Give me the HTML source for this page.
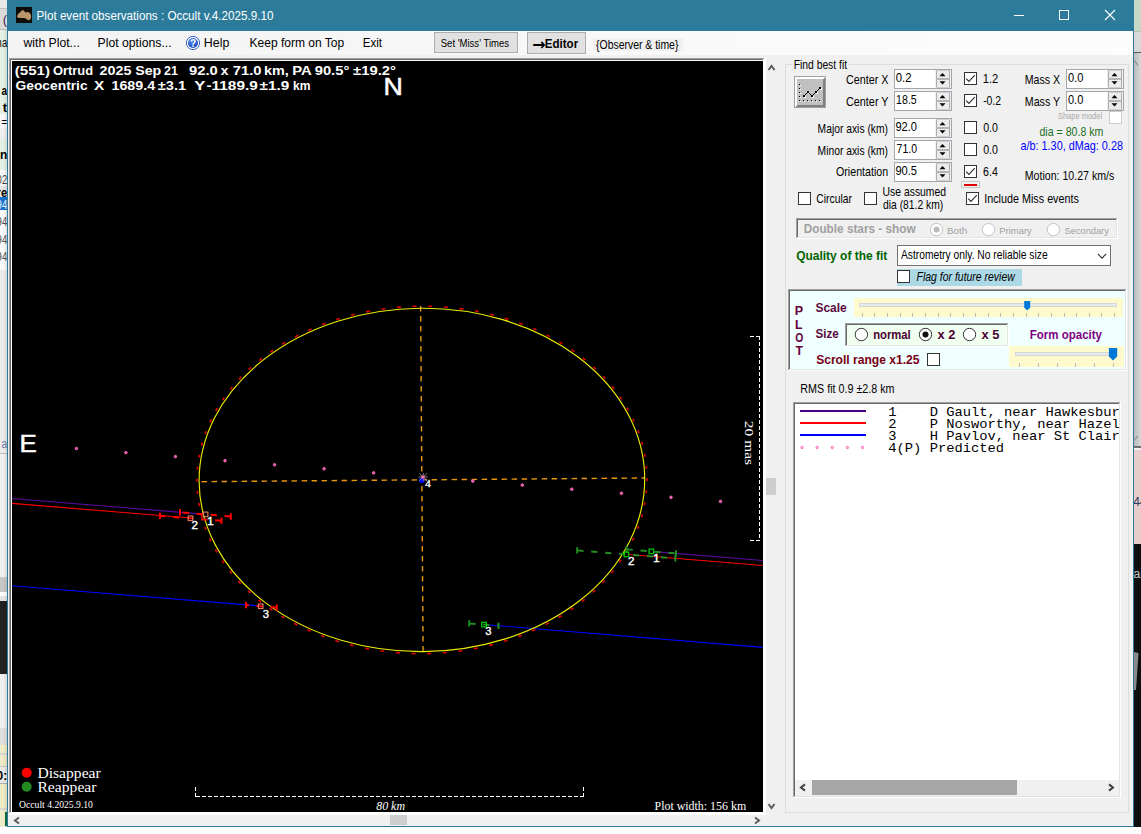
<!DOCTYPE html>
<html><head><meta charset="utf-8"><title>Plot event observations : Occult v.4.2025.9.10</title>
<style>
html,body{margin:0;padding:0;background:#fff;overflow:hidden}
body{width:1141px;height:834px;position:relative}
.sf{font-family:"Liberation Sans",sans-serif}
.rf{font-family:"Liberation Serif",serif}
.mf{font-family:"Liberation Mono",monospace}
text{white-space:pre}
</style></head><body>
<svg width="1141" height="834" viewBox="0 0 1141 834" style="position:absolute;left:0;top:0">
<defs>
<linearGradient id="mg" x1="0" x2="1" y1="0" y2="0"><stop offset="0" stop-color="#f3f3f3"/><stop offset="1" stop-color="#fdfdfd"/></linearGradient>
<radialGradient id="hg" cx="0.4" cy="0.3" r="0.8"><stop offset="0" stop-color="#5a8df0"/><stop offset="1" stop-color="#0a3fb8"/></radialGradient>
<clipPath id="pc"><rect x="12" y="61" width="751" height="751"/></clipPath>
<clipPath id="lc"><rect x="795" y="404" width="324" height="376"/></clipPath>
</defs>
<rect x="0" y="0" width="1141" height="834" fill="#ffffff" />
<clipPath id="ls"><rect x="0" y="0" width="7" height="827"/></clipPath>
<clipPath id="rs"><rect x="1134" y="0" width="7" height="827"/></clipPath>
<linearGradient id="lsh" x1="0" x2="1" y1="0" y2="0"><stop offset="0" stop-color="#000" stop-opacity="0"/><stop offset="0.5" stop-color="#000" stop-opacity="0.01"/><stop offset="1" stop-color="#000" stop-opacity="0.10"/></linearGradient>
<linearGradient id="rsh" x1="0" x2="1" y1="0" y2="0"><stop offset="0" stop-color="#000" stop-opacity="0.14"/><stop offset="1" stop-color="#000" stop-opacity="0"/></linearGradient>
<g id="leftstrip" shape-rendering="crispEdges">
<rect x="0" y="0" width="7" height="827" fill="#e6f1e6" />
<rect x="0" y="0" width="7" height="8" fill="#e8e8e8" />
<rect x="0" y="8" width="7" height="1" fill="#c0c0c0" />
<rect x="0" y="9" width="7" height="21" fill="#dadada" />
<rect x="0" y="29" width="7" height="1" fill="#b8b8b8" />
<rect x="0" y="114" width="7" height="14" fill="#fafafa" />
<rect x="0" y="128" width="7" height="10" fill="#f0f0f0" />
<rect x="0" y="170" width="7" height="16" fill="#f8f8f8" />
<rect x="0" y="186" width="7" height="11" fill="#e6e6e6" />
<rect x="0" y="197" width="7" height="13" fill="#1874d0" />
<rect x="0" y="210" width="7" height="60" fill="#fafafa" />
<rect x="0" y="270" width="7" height="183" fill="#ececec" />
<rect x="0" y="453" width="7" height="1" fill="#c0c0c0" />
<rect x="0" y="454" width="7" height="123" fill="#f0f0f0" />
<rect x="0" y="577" width="7" height="15" fill="#c8c8c8" />
<rect x="0" y="592" width="7" height="4" fill="#ffffff" />
<rect x="0" y="596" width="7" height="5" fill="#e4e4e4" />
<rect x="0" y="601" width="7" height="73" fill="#222222" />
<rect x="0" y="674" width="7" height="54" fill="#f0f0f0" />
<rect x="0" y="728" width="7" height="17" fill="#e0e0e0" />
<rect x="0" y="745" width="7" height="81" fill="#f0ecc8" />
<rect x="0" y="753" width="7" height="2" fill="#d8d8d8" />
<rect x="0" y="767" width="7" height="16" fill="#e8e8e4" />
<rect x="0" y="783" width="7" height="1" fill="#b0b0b0" />
<rect x="0" y="766" width="7" height="1" fill="#c8c8c8" />
<rect x="0" y="808" width="7" height="2" fill="#d8d8d8" />
<rect x="5" y="812" width="2" height="14" fill="#107040" />
<rect x="0" y="30" width="7" height="797" fill="url(#lsh)" />
</g>
<g clip-path="url(#ls)" text-anchor="end">
<text class="sf" x="7.2" y="24" font-size="13" fill="#402050">(</text>
<text class="sf" x="7.2" y="47" font-size="12" fill="#000" textLength="10.6" lengthAdjust="spacingAndGlyphs">na</text>
<text class="sf" x="7.2" y="95" font-size="12" fill="#000" font-weight="bold" textLength="5.6" lengthAdjust="spacingAndGlyphs">a</text>
<text class="sf" x="7.2" y="112" font-size="13" fill="#000" font-weight="bold">t</text>
<text class="sf" x="7.2" y="126" font-size="11" fill="#000" textLength="5.6" lengthAdjust="spacingAndGlyphs">=</text>
<text class="sf" x="7.2" y="159" font-size="12" fill="#000" font-weight="bold" textLength="10.6" lengthAdjust="spacingAndGlyphs">in</text>
<text class="sf" x="7.2" y="184" font-size="12" fill="#404040" font-weight="mf" textLength="10.6" lengthAdjust="spacingAndGlyphs">02</text>
<text class="sf" x="7.2" y="196.5" font-size="12" fill="#000" font-weight="bold" textLength="10.6" lengthAdjust="spacingAndGlyphs">re</text>
<text class="sf" x="7.2" y="208.5" font-size="13" fill="#e8f0ff" font-weight="mf" textLength="10.6" lengthAdjust="spacingAndGlyphs">94</text>
<text class="sf" x="7.2" y="226" font-size="13" fill="#505050" font-weight="mf" textLength="10.6" lengthAdjust="spacingAndGlyphs">94</text>
<text class="sf" x="7.2" y="243.5" font-size="13" fill="#505050" font-weight="mf" textLength="10.6" lengthAdjust="spacingAndGlyphs">94</text>
<text class="sf" x="7.2" y="261" font-size="13" fill="#505050" font-weight="mf" textLength="10.6" lengthAdjust="spacingAndGlyphs">94</text>
<text class="sf" x="7.2" y="448" font-size="12" fill="#6878a8" textLength="5.6" lengthAdjust="spacingAndGlyphs">a</text>
<text class="sf" x="7.2" y="780" font-size="12" fill="#000" font-weight="bold" textLength="10.6" lengthAdjust="spacingAndGlyphs">0:</text>
</g>
<g id="rightstrip" shape-rendering="crispEdges">
<rect x="1134" y="0" width="7" height="32" fill="#c6d8c6" />
<rect x="1134" y="32" width="7" height="414" fill="#d8d8d8" />
<rect x="1134" y="31" width="7" height="1" fill="#b8c0b8" />
<rect x="1134" y="52" width="7" height="1" fill="#585860" />
<rect x="1134" y="53" width="7" height="393" fill="url(#rsh)" />
<rect x="1134" y="446" width="7" height="2" fill="#707070" />
<rect x="1134" y="448" width="7" height="2" fill="#f0f0f0" />
<rect x="1134" y="450" width="7" height="94" fill="#e8cccc" />
<rect x="1134" y="544" width="7" height="283" fill="#0e0e0e" />
</g>
<path d="M1134.5 60.5 L1138 65.5" stroke="#888" stroke-width="1.2"/>
<path d="M1134.5 440 L1138 436" stroke="#999" stroke-width="1.2"/>
<path d="M1134 652 L1138.5 653 L1136 690 L1134 690 Z" fill="#8a8a8a"/>
<g clip-path="url(#rs)">
<text class="sf" x="1133.2" y="506" font-size="12" fill="#283858">44</text>
<text class="sf" x="1133.5" y="578" font-size="12" fill="#c8c8c8">ar</text>
</g>
<g id="window" shape-rendering="crispEdges">
<rect x="7" y="0" width="1127" height="827" fill="#2c7b9a" />
<rect x="8" y="31" width="1125" height="795" fill="#f0f0f0" />
<rect x="8" y="31" width="1125" height="24" fill="url(#mg)" />
</g>
<rect x="16" y="7" width="16" height="16" fill="#0e0c08" />
<path d="M17.1 16.6 C17.3 14.6 18.6 13.2 20.2 12.2 C21 10.9 22.3 10.1 23.4 10.3 C24.3 10.5 24.4 11.9 25.2 12.3 C26.2 12.7 27.4 11.8 28.6 12.2 C30.2 12.8 31.2 14.8 31.1 16.6 C31 18.4 30.4 20 29 20.2 C27.6 20.4 26.6 18.9 25.2 18.3 C23.6 17.6 21.4 18.1 19.6 18 C18.2 17.9 17 17.8 17.1 16.6 Z" fill="#b8956a"/>
<text class="sf" x="36.57" y="20" font-size="12.2" fill="#fff" textLength="236.86" lengthAdjust="spacingAndGlyphs" >Plot event observations : Occult v.4.2025.9.10</text>
<line x1="1014" y1="15.5" x2="1024" y2="15.5" stroke="#fff" stroke-width="1" shape-rendering="crispEdges"/>
<rect x="1059.5" y="10.5" width="9" height="9" fill="none" stroke="#fff" stroke-width="1" shape-rendering="crispEdges"/>
<path d="M1105 10 L1115 20 M1115 10 L1105 20" stroke="#fff" stroke-width="1.1" fill="none"/>
<text class="sf" x="23.50" y="46.8" font-size="12.2" fill="#000" textLength="56.27" lengthAdjust="spacingAndGlyphs" >with Plot...</text>
<text class="sf" x="97.52" y="46.8" font-size="12.2" fill="#000" textLength="74.07" lengthAdjust="spacingAndGlyphs" >Plot options...</text>
<circle cx="193" cy="43" r="6.6" fill="#fff" stroke="#3a62c8" stroke-width="1"/>
<circle cx="193" cy="43" r="5" fill="url(#hg)"/>
<text class="sf" x="189.94" y="46.6" font-size="10" fill="#fff" font-weight="bold" textLength="6.23" lengthAdjust="spacingAndGlyphs" >?</text>
<text class="sf" x="203.81" y="46.8" font-size="12.2" fill="#000" textLength="25.51" lengthAdjust="spacingAndGlyphs" >Help</text>
<text class="sf" x="249.54" y="46.8" font-size="12.2" fill="#000" textLength="94.65" lengthAdjust="spacingAndGlyphs" >Keep form on Top</text>
<text class="sf" x="362.77" y="46.8" font-size="12.2" fill="#000" textLength="19.31" lengthAdjust="spacingAndGlyphs" >Exit</text>
<rect x="434.5" y="32.5" width="83" height="20" fill="#e1e1e1" stroke="#adadad" stroke-width="1" shape-rendering="crispEdges"/>
<text class="sf" x="440.77" y="46.5" font-size="11" fill="#000" textLength="68.27" lengthAdjust="spacingAndGlyphs" >Set 'Miss' Times</text>
<rect x="527.5" y="32.5" width="58" height="21" fill="#e1e1e1" stroke="#adadad" stroke-width="1" shape-rendering="crispEdges"/>
<text x="532.2" y="49.6" font-size="16" font-weight="bold" style="font-family:'DejaVu Sans',sans-serif">→</text>
<text class="sf" x="544.85" y="48" font-size="13" fill="#000" font-weight="bold" textLength="33.31" lengthAdjust="spacingAndGlyphs" >Editor</text>
<rect x="593" y="38" width="90" height="13" fill="#f0f0f0" />
<text class="sf" x="596.04" y="49.2" font-size="12" fill="#000" textLength="82.34" lengthAdjust="spacingAndGlyphs" >{Observer &amp; time}</text>
<g shape-rendering="crispEdges">
<rect x="9" y="58" width="757" height="757" fill="#ffffff" />
<rect x="9" y="58" width="755" height="1" fill="#a0a0a0" />
<rect x="9" y="58" width="1" height="755" fill="#a0a0a0" />
<rect x="10" y="59" width="753" height="1" fill="#696969" />
<rect x="10" y="59" width="1" height="753" fill="#696969" />
<rect x="12" y="61" width="751" height="751" fill="#000000" />
<rect x="766" y="478" width="10" height="17" fill="#cdcdcd" />
<rect x="390" y="815" width="17" height="10" fill="#cdcdcd" />
</g>
<path d="M768.5 70.0 L771.5 66.0 L774.5 70.0" stroke="#5c5c5c" stroke-width="2.0" fill="none"/>
<path d="M768.5 804.0 L771.5 808.0 L774.5 804.0" stroke="#5c5c5c" stroke-width="2.0" fill="none"/>
<path d="M19.0 817.5 L15.0 820.5 L19.0 823.5" stroke="#5c5c5c" stroke-width="2.0" fill="none"/>
<path d="M755.0 817.5 L759.0 820.5 L755.0 823.5" stroke="#5c5c5c" stroke-width="2.0" fill="none"/>
<g clip-path="url(#pc)">
<text class="sf" x="14.75" y="74.6" font-size="13" fill="#fff" font-weight="bold" textLength="35.20" lengthAdjust="spacingAndGlyphs" >(551)</text>
<text class="sf" x="52.88" y="74.6" font-size="13" fill="#fff" font-weight="bold" textLength="40.17" lengthAdjust="spacingAndGlyphs" >Ortrud</text>
<text class="sf" x="99.50" y="74.6" font-size="13" fill="#fff" font-weight="bold" textLength="31.85" lengthAdjust="spacingAndGlyphs" >2025</text>
<text class="sf" x="135.17" y="74.6" font-size="13" fill="#fff" font-weight="bold" textLength="26.08" lengthAdjust="spacingAndGlyphs" >Sep</text>
<text class="sf" x="164.06" y="74.6" font-size="13" fill="#fff" font-weight="bold" textLength="13.88" lengthAdjust="spacingAndGlyphs" >21</text>
<text class="sf" x="188.98" y="74.6" font-size="13" fill="#fff" font-weight="bold" textLength="28.73" lengthAdjust="spacingAndGlyphs" >92.0</text>
<text class="sf" x="220.83" y="74.6" font-size="13" fill="#fff" font-weight="bold" textLength="7.65" lengthAdjust="spacingAndGlyphs" >x</text>
<text class="sf" x="232.81" y="74.6" font-size="13" fill="#fff" font-weight="bold" textLength="28.80" lengthAdjust="spacingAndGlyphs" >71.0</text>
<text class="sf" x="263.99" y="74.6" font-size="13" fill="#fff" font-weight="bold" textLength="24.79" lengthAdjust="spacingAndGlyphs" >km,</text>
<text class="sf" x="292.23" y="74.6" font-size="13" fill="#fff" font-weight="bold" textLength="19.54" lengthAdjust="spacingAndGlyphs" >PA</text>
<text class="sf" x="314.68" y="74.6" font-size="13" fill="#fff" font-weight="bold" textLength="34.63" lengthAdjust="spacingAndGlyphs" >90.5°</text>
<text class="sf" x="353.03" y="74.6" font-size="13" fill="#fff" font-weight="bold" textLength="42.97" lengthAdjust="spacingAndGlyphs" >±19.2°</text>
<text class="sf" x="15.55" y="89.9" font-size="13" fill="#fff" font-weight="bold" textLength="72.05" lengthAdjust="spacingAndGlyphs" >Geocentric</text>
<text class="sf" x="93.95" y="89.9" font-size="13" fill="#fff" font-weight="bold" textLength="10.26" lengthAdjust="spacingAndGlyphs" >X</text>
<text class="sf" x="111.44" y="89.9" font-size="13" fill="#fff" font-weight="bold" textLength="43.71" lengthAdjust="spacingAndGlyphs" >1689.4</text>
<text class="sf" x="157.83" y="89.9" font-size="13" fill="#fff" font-weight="bold" textLength="28.32" lengthAdjust="spacingAndGlyphs" >±3.1</text>
<text class="sf" x="194.35" y="89.9" font-size="13" fill="#fff" font-weight="bold" textLength="11.13" lengthAdjust="spacingAndGlyphs" >Y</text>
<text class="sf" x="206.49" y="89.9" font-size="13" fill="#fff" font-weight="bold" textLength="51.28" lengthAdjust="spacingAndGlyphs" >-1189.9</text>
<text class="sf" x="259.62" y="89.9" font-size="13" fill="#fff" font-weight="bold" textLength="29.70" lengthAdjust="spacingAndGlyphs" >±1.9</text>
<text class="sf" x="293.05" y="89.9" font-size="13" fill="#fff" font-weight="bold" textLength="17.48" lengthAdjust="spacingAndGlyphs" >km</text>
<text class="sf" x="383.46" y="95" font-size="24" fill="#fff" textLength="19.34" lengthAdjust="spacingAndGlyphs" stroke="#fff" stroke-width="0.5">N</text>
<text class="sf" x="19.43" y="452" font-size="24" fill="#fff" textLength="17.26" lengthAdjust="spacingAndGlyphs" stroke="#fff" stroke-width="0.5">E</text>
<line x1="12" y1="498.5" x2="203.5" y2="514.165" stroke="#5a0aa0" stroke-width="1.1" />
<line x1="12" y1="503.4" x2="188" y2="517.797" stroke="#ff0000" stroke-width="1.1" />
<line x1="12" y1="585.7" x2="258" y2="605.823" stroke="#0000ff" stroke-width="1.1" />
<line x1="654" y1="551.6" x2="763" y2="560.516" stroke="#5a0aa0" stroke-width="1.1"/>
<line x1="628.7" y1="554.5" x2="763" y2="565.486" stroke="#ff0000" stroke-width="1.1"/>
<line x1="487" y1="624.8" x2="763" y2="647.377" stroke="#0000ff" stroke-width="1.1"/>
<line x1="201.6" y1="481.7" x2="645" y2="478" stroke="#e8960c" stroke-width="1.4" stroke-dasharray="5.5 4.5"/>
<line x1="420.6" y1="306" x2="423.1" y2="652" stroke="#e8960c" stroke-width="1.4" stroke-dasharray="5.5 4.5"/>
<ellipse cx="421.9" cy="479.95" rx="222.8" ry="171.7" transform="rotate(-0.476 421.9 479.95)" fill="none" stroke="#eaea00" stroke-width="1.15"/>
<path d="M646.9 478.1L646.9 481.1M646.4 490.2L646.2 493.2M644.9 502.3L644.3 505.3M642.3 514.2L641.5 517.2M638.6 526.0L637.5 528.9M633.8 537.6L632.5 540.5M628.0 548.9L626.4 551.7M621.2 559.8L619.4 562.5M613.5 570.4L611.4 573.0M604.8 580.5L602.5 583.0M595.2 590.2L592.7 592.5M584.7 599.3L582.0 601.4M573.5 607.8L570.6 609.8M561.6 615.7L558.5 617.5M548.9 622.9L545.6 624.6M535.6 629.4L532.2 631.0M521.8 635.2L518.3 636.6M507.5 640.3L503.9 641.4M492.8 644.6L489.1 645.5M477.7 648.0L473.9 648.8M462.4 650.7L458.5 651.2M446.9 652.5L442.9 652.8M431.2 653.5L427.3 653.6M415.5 653.6L411.6 653.5M399.8 652.9L395.9 652.6M384.3 651.3L380.4 650.8M368.9 648.9L365.1 648.2M353.7 645.7L350.0 644.8M339.0 641.7L335.3 640.6M324.6 636.9L321.0 635.6M310.7 631.3L307.3 629.8M297.3 625.0L294.0 623.3M284.5 618.0L281.4 616.1M272.4 610.3L269.5 608.3M261.1 602.0L258.3 599.8M250.5 593.0L248.0 590.7M240.7 583.6L238.4 581.1M231.9 573.6L229.8 571.0M223.9 563.1L222.1 560.5M216.9 552.3L215.4 549.5M211.0 541.1L209.6 538.3M206.0 529.6L204.9 526.7M202.1 517.9L201.3 514.9M199.3 506.0L198.8 503.0M197.6 493.9L197.3 490.9M196.9 481.8L196.9 478.8M197.4 469.7L197.6 466.7M198.9 457.6L199.5 454.6M201.5 445.7L202.3 442.7M205.2 433.9L206.3 431.0M210.0 422.3L211.3 419.4M215.8 411.0L217.4 408.2M222.6 400.1L224.4 397.4M230.3 389.5L232.4 386.9M239.0 379.4L241.3 376.9M248.6 369.7L251.1 367.4M259.1 360.6L261.8 358.5M270.3 352.1L273.2 350.1M282.2 344.2L285.3 342.4M294.9 337.0L298.2 335.3M308.2 330.5L311.6 328.9M322.0 324.7L325.5 323.3M336.3 319.6L339.9 318.5M351.0 315.3L354.7 314.4M366.1 311.9L369.9 311.1M381.4 309.2L385.3 308.7M396.9 307.4L400.9 307.1M412.6 306.4L416.5 306.3M428.3 306.3L432.2 306.4M444.0 307.0L447.9 307.3M459.5 308.6L463.4 309.1M474.9 311.0L478.7 311.7M490.1 314.2L493.8 315.1M504.8 318.2L508.5 319.3M519.2 323.0L522.8 324.3M533.1 328.6L536.5 330.1M546.5 334.9L549.8 336.6M559.3 341.9L562.4 343.8M571.4 349.6L574.3 351.6M582.7 357.9L585.5 360.1M593.3 366.9L595.8 369.2M603.1 376.3L605.4 378.8M611.9 386.3L614.0 388.9M619.9 396.8L621.7 399.4M626.9 407.6L628.4 410.4M632.8 418.8L634.2 421.6M637.8 430.3L638.9 433.2M641.7 442.0L642.5 445.0M644.5 453.9L645.0 456.9M646.2 466.0L646.5 469.0" stroke="#e00000" stroke-width="1.6" fill="none"/>
<circle cx="76.4" cy="448.5" r="1.3" fill="#d850a8" stroke="#ff70c0" stroke-width="0.9"/>
<circle cx="125.9" cy="452.6" r="1.3" fill="#d850a8" stroke="#ff70c0" stroke-width="0.9"/>
<circle cx="175.4" cy="456.6" r="1.3" fill="#d850a8" stroke="#ff70c0" stroke-width="0.9"/>
<circle cx="225.0" cy="460.7" r="1.3" fill="#d850a8" stroke="#ff70c0" stroke-width="0.9"/>
<circle cx="274.6" cy="464.8" r="1.3" fill="#d850a8" stroke="#ff70c0" stroke-width="0.9"/>
<circle cx="324.1" cy="468.8" r="1.3" fill="#d850a8" stroke="#ff70c0" stroke-width="0.9"/>
<circle cx="373.6" cy="472.9" r="1.3" fill="#d850a8" stroke="#ff70c0" stroke-width="0.9"/>
<circle cx="472.8" cy="481.1" r="1.3" fill="#d850a8" stroke="#ff70c0" stroke-width="0.9"/>
<circle cx="522.3" cy="485.1" r="1.3" fill="#d850a8" stroke="#ff70c0" stroke-width="0.9"/>
<circle cx="571.8" cy="489.2" r="1.3" fill="#d850a8" stroke="#ff70c0" stroke-width="0.9"/>
<circle cx="621.4" cy="493.3" r="1.3" fill="#d850a8" stroke="#ff70c0" stroke-width="0.9"/>
<circle cx="671.0" cy="497.3" r="1.3" fill="#d850a8" stroke="#ff70c0" stroke-width="0.9"/>
<circle cx="720.5" cy="501.4" r="1.3" fill="#d850a8" stroke="#ff70c0" stroke-width="0.9"/>
<line x1="230.8" y1="516.461" x2="180" y2="512.306" stroke="#ff0000" stroke-width="2" stroke-dasharray="6.3 7.7"/>
<line x1="180" y1="509.106" x2="180" y2="515.506" stroke="#ff0000" stroke-width="2" />
<line x1="230.8" y1="513.261" x2="230.8" y2="519.661" stroke="#ff0000" stroke-width="2" />
<line x1="221.4" y1="520.828" x2="159.9" y2="515.797" stroke="#ff0000" stroke-width="2" stroke-dasharray="6.3 7.7"/>
<line x1="159.9" y1="512.597" x2="159.9" y2="518.997" stroke="#ff0000" stroke-width="2" />
<line x1="221.4" y1="517.628" x2="221.4" y2="524.028" stroke="#ff0000" stroke-width="2" />
<line x1="276.8" y1="607.617" x2="246" y2="605.098" stroke="#ff0000" stroke-width="2" stroke-dasharray="6.3 7.7"/>
<line x1="246" y1="601.898" x2="246" y2="608.298" stroke="#ff0000" stroke-width="2" />
<line x1="276.8" y1="604.417" x2="276.8" y2="610.817" stroke="#ff0000" stroke-width="2" />
<line x1="577.2" y1="550.375" x2="675.3" y2="558.4" stroke="#228b22" stroke-width="2" stroke-dasharray="6.3 7.7"/>
<line x1="577.2" y1="547.175" x2="577.2" y2="553.575" stroke="#228b22" stroke-width="2" />
<line x1="675.3" y1="555.2" x2="675.3" y2="561.6" stroke="#228b22" stroke-width="2" />
<line x1="626.5" y1="549.363" x2="676" y2="553.412" stroke="#228b22" stroke-width="2" stroke-dasharray="6.3 7.7"/>
<line x1="626.5" y1="546.163" x2="626.5" y2="552.563" stroke="#228b22" stroke-width="2" />
<line x1="676" y1="550.212" x2="676" y2="556.612" stroke="#228b22" stroke-width="2" />
<line x1="469.2" y1="623.389" x2="498.6" y2="625.794" stroke="#228b22" stroke-width="2" stroke-dasharray="6.3 7.7"/>
<line x1="469.2" y1="620.189" x2="469.2" y2="626.589" stroke="#228b22" stroke-width="2" />
<line x1="498.6" y1="622.594" x2="498.6" y2="628.994" stroke="#228b22" stroke-width="2" />
<rect x="203.3" y="512.1" width="4.6" height="4.6" fill="none" stroke="#e9806a" stroke-width="1.1"/>
<rect x="188.2" y="516.0" width="4.6" height="4.6" fill="none" stroke="#e9806a" stroke-width="1.1"/>
<rect x="258.4" y="604.0" width="4.6" height="4.6" fill="none" stroke="#e9806a" stroke-width="1.1"/>
<rect x="624.1" y="552.1" width="4.6" height="4.6" fill="none" stroke="#00e000" stroke-width="1.1"/>
<rect x="649.1" y="549.1" width="4.6" height="4.6" fill="none" stroke="#00e000" stroke-width="1.1"/>
<rect x="481.7" y="622.3" width="4.6" height="4.6" fill="none" stroke="#00e000" stroke-width="1.1"/>
<text class="sf" x="191.62" y="529.2" font-size="10" fill="#fff" textLength="6.48" lengthAdjust="spacingAndGlyphs" stroke="#fff" stroke-width="0.35">2</text>
<text class="sf" x="207.09" y="525.2" font-size="10" fill="#fff" textLength="6.78" lengthAdjust="spacingAndGlyphs" stroke="#fff" stroke-width="0.35">1</text>
<text class="sf" x="262.75" y="617.6" font-size="10" fill="#fff" textLength="6.21" lengthAdjust="spacingAndGlyphs" stroke="#fff" stroke-width="0.35">3</text>
<text class="sf" x="628.12" y="565.2" font-size="10" fill="#fff" textLength="6.48" lengthAdjust="spacingAndGlyphs" stroke="#fff" stroke-width="0.35">2</text>
<text class="sf" x="652.99" y="562.2" font-size="10" fill="#fff" textLength="6.78" lengthAdjust="spacingAndGlyphs" stroke="#fff" stroke-width="0.35">1</text>
<text class="sf" x="485.35" y="635.3" font-size="10" fill="#fff" textLength="6.21" lengthAdjust="spacingAndGlyphs" stroke="#fff" stroke-width="0.35">3</text>
<circle cx="421.7" cy="480.3" r="2.8" fill="#0000ff"/>
<path d="M419 473.2 L427.4 480.8 M427.4 473.2 L419 480.8 M423.2 472.8 L423.2 481.2 M418.6 477 L427.8 477" stroke="#a0a0a0" stroke-width="0.8" fill="none"/>
<rect x="421.8" y="475.6" width="2.8" height="2.8" fill="#ff69b4" />
<text class="rf" x="425.38" y="487" font-size="10" fill="#fff" textLength="5.48" lengthAdjust="spacingAndGlyphs" stroke="#fff" stroke-width="0.35">4</text>
<line x1="759.5" y1="336" x2="759.5" y2="540.5" stroke="#fff" stroke-width="1" stroke-dasharray="4 2" shape-rendering="crispEdges"/>
<line x1="750" y1="336.3" x2="760" y2="336.3" stroke="#fff" stroke-width="1" stroke-dasharray="4 2" shape-rendering="crispEdges"/>
<line x1="750" y1="540.5" x2="760" y2="540.5" stroke="#fff" stroke-width="1" stroke-dasharray="4 2" shape-rendering="crispEdges"/>
<g transform="translate(745.2 421.5) rotate(90)">
<text class="rf" x="-0.70" y="0" font-size="13.2" fill="#fff" textLength="44.25" lengthAdjust="spacingAndGlyphs" >20 mas</text>
</g>
<line x1="195.5" y1="796.5" x2="583.5" y2="796.5" stroke="#fff" stroke-width="1" stroke-dasharray="4 2" shape-rendering="crispEdges"/>
<line x1="195.5" y1="787" x2="195.5" y2="797" stroke="#fff" stroke-width="1" stroke-dasharray="4 2" shape-rendering="crispEdges"/>
<line x1="583.5" y1="787" x2="583.5" y2="797" stroke="#fff" stroke-width="1" stroke-dasharray="4 2" shape-rendering="crispEdges"/>
<text class="rf" x="376.26" y="810" font-size="13" fill="#fff" font-style="italic" textLength="28.73" lengthAdjust="spacingAndGlyphs" >80 km</text>
<text class="rf" x="654.54" y="809.6" font-size="13" fill="#fff" textLength="91.64" lengthAdjust="spacingAndGlyphs" >Plot width: 156 km</text>
<circle cx="26.7" cy="772.7" r="5" fill="#ff0000"/>
<circle cx="26.7" cy="786.7" r="5" fill="#228b22"/>
<text class="rf" x="37.43" y="778" font-size="15.5" fill="#fff" textLength="63.30" lengthAdjust="spacingAndGlyphs" >Disappear</text>
<text class="rf" x="37.43" y="792" font-size="15.5" fill="#fff" textLength="59.13" lengthAdjust="spacingAndGlyphs" >Reappear</text>
<text class="rf" x="19.11" y="807.7" font-size="10" fill="#fff" textLength="73.83" lengthAdjust="spacingAndGlyphs" >Occult 4.2025.9.10</text>
</g>
<g shape-rendering="crispEdges">
<rect x="785" y="64" width="1" height="749" fill="#dcdcdc" />
<rect x="1128" y="64" width="1" height="749" fill="#dcdcdc" />
<rect x="785" y="812" width="344" height="1" fill="#dcdcdc" />
<rect x="785" y="64" width="7" height="1" fill="#dcdcdc" />
<rect x="849" y="64" width="280" height="1" fill="#dcdcdc" />
</g>
<text class="sf" x="793.67" y="69" font-size="12.7" fill="#000" textLength="53.42" lengthAdjust="spacingAndGlyphs" >Find best fit</text>
<g shape-rendering="crispEdges">
<rect x="794" y="76" width="32" height="32" fill="#a0a0a0" />
<rect x="795" y="77" width="30" height="30" fill="#ffffff" />
<path d="M825 77 L825 107 L795 107 L797 105 L823 105 L823 79 Z" fill="#808080"/>
<rect x="797" y="79" width="26" height="26" fill="#c0c0c0" />
<rect x="800" y="85" width="1" height="1" fill="#ffffff" />
<rect x="799" y="84" width="1" height="1" fill="#000" />
<rect x="800" y="89" width="1" height="1" fill="#ffffff" />
<rect x="799" y="88" width="1" height="1" fill="#000" />
<rect x="800" y="93" width="1" height="1" fill="#ffffff" />
<rect x="799" y="92" width="1" height="1" fill="#000" />
<rect x="800" y="97" width="1" height="1" fill="#ffffff" />
<rect x="799" y="96" width="1" height="1" fill="#000" />
<rect x="800" y="101" width="1" height="1" fill="#ffffff" />
<rect x="799" y="100" width="1" height="1" fill="#000" />
<rect x="804" y="101" width="1" height="1" fill="#ffffff" />
<rect x="803" y="100" width="1" height="1" fill="#000" />
<rect x="808" y="101" width="1" height="1" fill="#ffffff" />
<rect x="807" y="100" width="1" height="1" fill="#000" />
<rect x="812" y="101" width="1" height="1" fill="#ffffff" />
<rect x="811" y="100" width="1" height="1" fill="#000" />
<rect x="816" y="101" width="1" height="1" fill="#ffffff" />
<rect x="815" y="100" width="1" height="1" fill="#000" />
<rect x="820" y="101" width="1" height="1" fill="#ffffff" />
<rect x="819" y="100" width="1" height="1" fill="#000" />
<rect x="804" y="96" width="2" height="2" fill="#ffffff" />
<rect x="808" y="92" width="2" height="2" fill="#ffffff" />
<rect x="812" y="96" width="2" height="2" fill="#ffffff" />
<rect x="816" y="92" width="2" height="2" fill="#ffffff" />
<rect x="820" y="88" width="2" height="2" fill="#ffffff" />
</g>
<path d="M804 96 L808 92 L812 96 L820 88" stroke="#000" stroke-width="1" fill="none"/>
<g shape-rendering="crispEdges">
<rect x="803" y="95" width="2" height="2" fill="#000" />
<rect x="807" y="91" width="2" height="2" fill="#000" />
<rect x="811" y="95" width="2" height="2" fill="#000" />
<rect x="815" y="91" width="2" height="2" fill="#000" />
<rect x="819" y="87" width="2" height="2" fill="#000" />
</g>
<text class="sf" x="845.96" y="84" font-size="12.7" fill="#000" textLength="42.57" lengthAdjust="spacingAndGlyphs" >Center X</text>
<g shape-rendering="crispEdges">
<rect x="894.5" y="69.5" width="57" height="19" fill="#ffffff" stroke="#a4a6ac" stroke-width="1" />
<rect x="935" y="70" width="16" height="18" fill="#f0f0f0" />
<rect x="936" y="71" width="14" height="16" fill="#ececec" />
<rect x="936" y="71" width="1" height="16" fill="#acacac" />
<rect x="949" y="71" width="1" height="16" fill="#acacac" />
<rect x="936" y="70" width="14" height="1" fill="#cfcfcf" />
<rect x="936" y="87" width="14" height="1" fill="#cfcfcf" />
<rect x="936" y="78" width="14" height="2" fill="#b4b4b4" />
</g>
<path d="M939.5 76.2 L942.5 73 L945.5 76.2 Z" fill="#000"/>
<path d="M939.5 81.3 L942.5 84.5 L945.5 81.3 Z" fill="#000"/>
<text class="sf" x="895.75" y="82" font-size="12.7" fill="#000" textLength="15.72" lengthAdjust="spacingAndGlyphs" >0.2</text>
<rect x="964.5" y="72.5" width="12" height="12" fill="#ffffff" stroke="#333333" stroke-width="1" shape-rendering="crispEdges"/>
<path d="M966.2 78.6 L968.9 81.5 L974.8 75.2" stroke="#303030" stroke-width="1.15" fill="none"/>
<text class="sf" x="982.77" y="83" font-size="12.7" fill="#000" textLength="15.39" lengthAdjust="spacingAndGlyphs" >1.2</text>
<text class="sf" x="845.96" y="106" font-size="12.7" fill="#000" textLength="42.60" lengthAdjust="spacingAndGlyphs" >Center Y</text>
<g shape-rendering="crispEdges">
<rect x="894.5" y="91.5" width="57" height="19" fill="#ffffff" stroke="#a4a6ac" stroke-width="1" />
<rect x="935" y="92" width="16" height="18" fill="#f0f0f0" />
<rect x="936" y="93" width="14" height="16" fill="#ececec" />
<rect x="936" y="93" width="1" height="16" fill="#acacac" />
<rect x="949" y="93" width="1" height="16" fill="#acacac" />
<rect x="936" y="92" width="14" height="1" fill="#cfcfcf" />
<rect x="936" y="109" width="14" height="1" fill="#cfcfcf" />
<rect x="936" y="100" width="14" height="2" fill="#b4b4b4" />
</g>
<path d="M939.5 98.2 L942.5 95 L945.5 98.2 Z" fill="#000"/>
<path d="M939.5 103.3 L942.5 106.5 L945.5 103.3 Z" fill="#000"/>
<text class="sf" x="896.10" y="104" font-size="12.7" fill="#000" textLength="20.63" lengthAdjust="spacingAndGlyphs" >18.5</text>
<rect x="964.5" y="94.5" width="12" height="12" fill="#ffffff" stroke="#333333" stroke-width="1" shape-rendering="crispEdges"/>
<path d="M966.2 100.6 L968.9 103.5 L974.8 97.2" stroke="#303030" stroke-width="1.15" fill="none"/>
<text class="sf" x="983.13" y="105" font-size="12.7" fill="#000" textLength="17.92" lengthAdjust="spacingAndGlyphs" >-0.2</text>
<text class="sf" x="817.57" y="133" font-size="12.7" fill="#000" textLength="70.48" lengthAdjust="spacingAndGlyphs" >Major axis (km)</text>
<g shape-rendering="crispEdges">
<rect x="894.5" y="118.5" width="57" height="19" fill="#ffffff" stroke="#a4a6ac" stroke-width="1" />
<rect x="935" y="119" width="16" height="18" fill="#f0f0f0" />
<rect x="936" y="120" width="14" height="16" fill="#ececec" />
<rect x="936" y="120" width="1" height="16" fill="#acacac" />
<rect x="949" y="120" width="1" height="16" fill="#acacac" />
<rect x="936" y="119" width="14" height="1" fill="#cfcfcf" />
<rect x="936" y="136" width="14" height="1" fill="#cfcfcf" />
<rect x="936" y="127" width="14" height="2" fill="#b4b4b4" />
</g>
<path d="M939.5 125.2 L942.5 122 L945.5 125.2 Z" fill="#000"/>
<path d="M939.5 130.3 L942.5 133.5 L945.5 130.3 Z" fill="#000"/>
<text class="sf" x="895.40" y="131" font-size="12.7" fill="#000" textLength="21.60" lengthAdjust="spacingAndGlyphs" >92.0</text>
<rect x="964.5" y="121.5" width="12" height="12" fill="#ffffff" stroke="#333333" stroke-width="1" shape-rendering="crispEdges"/>
<text class="sf" x="983.17" y="132" font-size="12.7" fill="#000" textLength="14.80" lengthAdjust="spacingAndGlyphs" >0.0</text>
<text class="sf" x="817.57" y="155" font-size="12.7" fill="#000" textLength="70.48" lengthAdjust="spacingAndGlyphs" >Minor axis (km)</text>
<g shape-rendering="crispEdges">
<rect x="894.5" y="140.5" width="57" height="19" fill="#ffffff" stroke="#a4a6ac" stroke-width="1" />
<rect x="935" y="141" width="16" height="18" fill="#f0f0f0" />
<rect x="936" y="142" width="14" height="16" fill="#ececec" />
<rect x="936" y="142" width="1" height="16" fill="#acacac" />
<rect x="949" y="142" width="1" height="16" fill="#acacac" />
<rect x="936" y="141" width="14" height="1" fill="#cfcfcf" />
<rect x="936" y="158" width="14" height="1" fill="#cfcfcf" />
<rect x="936" y="149" width="14" height="2" fill="#b4b4b4" />
</g>
<path d="M939.5 147.2 L942.5 144 L945.5 147.2 Z" fill="#000"/>
<path d="M939.5 152.3 L942.5 155.5 L945.5 152.3 Z" fill="#000"/>
<text class="sf" x="896.58" y="153" font-size="12.7" fill="#000" textLength="20.41" lengthAdjust="spacingAndGlyphs" >71.0</text>
<rect x="964.5" y="143.5" width="12" height="12" fill="#ffffff" stroke="#333333" stroke-width="1" shape-rendering="crispEdges"/>
<text class="sf" x="983.17" y="154" font-size="12.7" fill="#000" textLength="14.80" lengthAdjust="spacingAndGlyphs" >0.0</text>
<text class="sf" x="836.02" y="176" font-size="12.7" fill="#000" textLength="52.09" lengthAdjust="spacingAndGlyphs" >Orientation</text>
<g shape-rendering="crispEdges">
<rect x="894.5" y="162.5" width="57" height="19" fill="#ffffff" stroke="#a4a6ac" stroke-width="1" />
<rect x="935" y="163" width="16" height="18" fill="#f0f0f0" />
<rect x="936" y="164" width="14" height="16" fill="#ececec" />
<rect x="936" y="164" width="1" height="16" fill="#acacac" />
<rect x="949" y="164" width="1" height="16" fill="#acacac" />
<rect x="936" y="163" width="14" height="1" fill="#cfcfcf" />
<rect x="936" y="180" width="14" height="1" fill="#cfcfcf" />
<rect x="936" y="171" width="14" height="2" fill="#b4b4b4" />
</g>
<path d="M939.5 169.2 L942.5 166 L945.5 169.2 Z" fill="#000"/>
<path d="M939.5 174.3 L942.5 177.5 L945.5 174.3 Z" fill="#000"/>
<text class="sf" x="895.40" y="175" font-size="12.7" fill="#000" textLength="21.66" lengthAdjust="spacingAndGlyphs" >90.5</text>
<rect x="964.5" y="165.5" width="12" height="12" fill="#ffffff" stroke="#333333" stroke-width="1" shape-rendering="crispEdges"/>
<path d="M966.2 171.6 L968.9 174.5 L974.8 168.2" stroke="#303030" stroke-width="1.15" fill="none"/>
<text class="sf" x="983.07" y="176" font-size="12.7" fill="#000" textLength="14.80" lengthAdjust="spacingAndGlyphs" >6.4</text>
<text class="sf" x="1024.75" y="84" font-size="12.7" fill="#000" textLength="35.41" lengthAdjust="spacingAndGlyphs" >Mass X</text>
<text class="sf" x="1024.75" y="106" font-size="12.7" fill="#000" textLength="35.38" lengthAdjust="spacingAndGlyphs" >Mass Y</text>
<g shape-rendering="crispEdges">
<rect x="1066.5" y="69.5" width="57" height="19" fill="#ffffff" stroke="#a4a6ac" stroke-width="1" />
<rect x="1107" y="70" width="16" height="18" fill="#f0f0f0" />
<rect x="1108" y="71" width="14" height="16" fill="#ececec" />
<rect x="1108" y="71" width="1" height="16" fill="#acacac" />
<rect x="1121" y="71" width="1" height="16" fill="#acacac" />
<rect x="1108" y="70" width="14" height="1" fill="#cfcfcf" />
<rect x="1108" y="87" width="14" height="1" fill="#cfcfcf" />
<rect x="1108" y="78" width="14" height="2" fill="#b4b4b4" />
</g>
<path d="M1111.5 76.2 L1114.5 73 L1117.5 76.2 Z" fill="#000"/>
<path d="M1111.5 81.3 L1114.5 84.5 L1117.5 81.3 Z" fill="#000"/>
<text class="sf" x="1067.96" y="82" font-size="12.7" fill="#000" textLength="15.33" lengthAdjust="spacingAndGlyphs" >0.0</text>
<g shape-rendering="crispEdges">
<rect x="1066.5" y="91.5" width="57" height="19" fill="#ffffff" stroke="#a4a6ac" stroke-width="1" />
<rect x="1107" y="92" width="16" height="18" fill="#f0f0f0" />
<rect x="1108" y="93" width="14" height="16" fill="#ececec" />
<rect x="1108" y="93" width="1" height="16" fill="#acacac" />
<rect x="1121" y="93" width="1" height="16" fill="#acacac" />
<rect x="1108" y="92" width="14" height="1" fill="#cfcfcf" />
<rect x="1108" y="109" width="14" height="1" fill="#cfcfcf" />
<rect x="1108" y="100" width="14" height="2" fill="#b4b4b4" />
</g>
<path d="M1111.5 98.2 L1114.5 95 L1117.5 98.2 Z" fill="#000"/>
<path d="M1111.5 103.3 L1114.5 106.5 L1117.5 103.3 Z" fill="#000"/>
<text class="sf" x="1067.96" y="104" font-size="12.7" fill="#000" textLength="15.33" lengthAdjust="spacingAndGlyphs" >0.0</text>
<text class="sf" x="1057.96" y="119.2" font-size="8.7" fill="#a8a8a8" textLength="44.15" lengthAdjust="spacingAndGlyphs" >Shape model</text>
<rect x="1109.5" y="111.5" width="12" height="12" fill="#ffffff" stroke="#cccccc" stroke-width="1" shape-rendering="crispEdges"/>
<text class="sf" x="1039.48" y="136" font-size="12.7" fill="#1f6f1f" textLength="63.87" lengthAdjust="spacingAndGlyphs" >dia = 80.8 km</text>
<text class="sf" x="1020.47" y="150" font-size="12.7" fill="#0000ff" textLength="102.48" lengthAdjust="spacingAndGlyphs" >a/b: 1.30, dMag: 0.28</text>
<text class="sf" x="1024.75" y="180" font-size="12.7" fill="#000" textLength="89.50" lengthAdjust="spacingAndGlyphs" >Motion: 10.27 km/s</text>
<rect x="961.5" y="181.5" width="18" height="6" fill="#f0f0f0" stroke="#c8c8c8" stroke-width="1" shape-rendering="crispEdges"/>
<rect x="964" y="184" width="13" height="2" fill="#e00000" shape-rendering="crispEdges"/>
<rect x="798.5" y="192.5" width="12" height="12" fill="#ffffff" stroke="#333333" stroke-width="1" shape-rendering="crispEdges"/>
<text class="sf" x="816.28" y="203" font-size="12.7" fill="#000" textLength="35.67" lengthAdjust="spacingAndGlyphs" >Circular</text>
<rect x="864.5" y="192.5" width="12" height="12" fill="#ffffff" stroke="#333333" stroke-width="1" shape-rendering="crispEdges"/>
<text class="sf" x="882.62" y="196" font-size="12.7" fill="#000" textLength="63.39" lengthAdjust="spacingAndGlyphs" >Use assumed</text>
<text class="sf" x="882.99" y="209" font-size="12.7" fill="#000" textLength="60.34" lengthAdjust="spacingAndGlyphs" >dia (81.2 km)</text>
<rect x="966.5" y="192.5" width="12" height="12" fill="#ffffff" stroke="#333333" stroke-width="1" shape-rendering="crispEdges"/>
<path d="M968.2 198.6 L970.9 201.5 L976.8 195.2" stroke="#303030" stroke-width="1.15" fill="none"/>
<text class="sf" x="984.23" y="203" font-size="12.7" fill="#000" textLength="94.67" lengthAdjust="spacingAndGlyphs" >Include Miss events</text>
<g shape-rendering="crispEdges">
<rect x="796" y="218" width="322" height="21" fill="#ffffff" />
<rect x="796" y="218" width="321" height="20" fill="#a0a0a0" />
<rect x="797" y="219" width="320" height="19" fill="#e3e3e3" />
<rect x="797" y="219" width="319" height="18" fill="#696969" />
<rect x="798" y="220" width="318" height="17" fill="#f0f0f0" />
</g>
<text class="sf" x="803.74" y="233" font-size="12.3" fill="#a0a0a0" font-weight="bold" textLength="111.83" lengthAdjust="spacingAndGlyphs" >Double stars - show</text>
<circle cx="936.5" cy="229.6" r="6.2" fill="#fff" stroke="#c4c4c4" stroke-width="1"/>
<circle cx="936.5" cy="229.6" r="3" fill="#bcbcbc"/>
<text class="sf" x="946.91" y="233.6" font-size="9.2" fill="#a0a0a0" textLength="20.36" lengthAdjust="spacingAndGlyphs" >Both</text>
<circle cx="988.5" cy="229.6" r="6.2" fill="#fff" stroke="#c4c4c4" stroke-width="1"/>
<text class="sf" x="999.24" y="233.6" font-size="9.2" fill="#a0a0a0" textLength="32.55" lengthAdjust="spacingAndGlyphs" >Primary</text>
<circle cx="1053.4" cy="229.6" r="6.2" fill="#fff" stroke="#c4c4c4" stroke-width="1"/>
<text class="sf" x="1064.58" y="233.6" font-size="9.2" fill="#a0a0a0" textLength="44.22" lengthAdjust="spacingAndGlyphs" >Secondary</text>
<text class="sf" x="796.22" y="260" font-size="12.3" fill="#006400" font-weight="bold" textLength="91.01" lengthAdjust="spacingAndGlyphs" >Quality of the fit</text>
<rect x="897.5" y="245.5" width="213" height="20" fill="#ffffff" stroke="#707070" stroke-width="1" shape-rendering="crispEdges"/>
<text class="sf" x="901.00" y="259" font-size="12.7" fill="#000" textLength="146.61" lengthAdjust="spacingAndGlyphs" >Astrometry only. No reliable size</text>
<path d="M1097.9 253.9 L1102 258.1 L1106.1 253.9" stroke="#303030" stroke-width="1.1" fill="none"/>
<rect x="897" y="269" width="125" height="17" fill="#add8e6" shape-rendering="crispEdges"/>
<rect x="897.5" y="270.5" width="12" height="12" fill="#ffffff" stroke="#333333" stroke-width="1" shape-rendering="crispEdges"/>
<text class="sf" x="916.59" y="281" font-size="12.7" fill="#000" font-style="italic" textLength="98.17" lengthAdjust="spacingAndGlyphs" >Flag for future review</text>
<g shape-rendering="crispEdges">
<rect x="788" y="289" width="339" height="82" fill="#ffffff" />
<rect x="788" y="289" width="338" height="81" fill="#a0a0a0" />
<rect x="789" y="290" width="337" height="80" fill="#e3e3e3" />
<rect x="789" y="290" width="336" height="79" fill="#696969" />
<rect x="790" y="291" width="335" height="78" fill="#f0ffff" />
<rect x="854" y="298" width="269" height="19" fill="#fffacd" />
<rect x="1009" y="346" width="115" height="21" fill="#fffacd" />
<rect x="859.5" y="303.5" width="257" height="3" fill="#e7eaea" stroke="#d6d6d6" stroke-width="1" />
<rect x="1015.5" y="352.5" width="100" height="3" fill="#e7eaea" stroke="#d6d6d6" stroke-width="1" />
<rect x="862" y="313" width="1" height="4" fill="#bcbcb0" />
<rect x="874" y="313" width="1" height="4" fill="#bcbcb0" />
<rect x="887" y="313" width="1" height="4" fill="#bcbcb0" />
<rect x="900" y="313" width="1" height="4" fill="#bcbcb0" />
<rect x="912" y="313" width="1" height="4" fill="#bcbcb0" />
<rect x="925" y="313" width="1" height="4" fill="#bcbcb0" />
<rect x="938" y="313" width="1" height="4" fill="#bcbcb0" />
<rect x="950" y="313" width="1" height="4" fill="#bcbcb0" />
<rect x="963" y="313" width="1" height="4" fill="#bcbcb0" />
<rect x="975" y="313" width="1" height="4" fill="#bcbcb0" />
<rect x="988" y="313" width="1" height="4" fill="#bcbcb0" />
<rect x="1000" y="313" width="1" height="4" fill="#bcbcb0" />
<rect x="1013" y="313" width="1" height="4" fill="#bcbcb0" />
<rect x="1026" y="313" width="1" height="4" fill="#bcbcb0" />
<rect x="1038" y="313" width="1" height="4" fill="#bcbcb0" />
<rect x="1051" y="313" width="1" height="4" fill="#bcbcb0" />
<rect x="1064" y="313" width="1" height="4" fill="#bcbcb0" />
<rect x="1076" y="313" width="1" height="4" fill="#bcbcb0" />
<rect x="1089" y="313" width="1" height="4" fill="#bcbcb0" />
<rect x="1101" y="313" width="1" height="4" fill="#bcbcb0" />
<rect x="1114" y="313" width="1" height="4" fill="#bcbcb0" />
<rect x="1019" y="363" width="1" height="4" fill="#bcbcb0" />
<rect x="1038" y="363" width="1" height="4" fill="#bcbcb0" />
<rect x="1057" y="363" width="1" height="4" fill="#bcbcb0" />
<rect x="1075" y="363" width="1" height="4" fill="#bcbcb0" />
<rect x="1094" y="363" width="1" height="4" fill="#bcbcb0" />
<rect x="1113" y="363" width="1" height="4" fill="#bcbcb0" />
</g>
<path d="M1024.2 301 H1030.2 V307.6 L1027.2 310.6 L1024.2 307.6 Z" fill="#0078d7"/>
<path d="M1108.9 347.9 H1117.2 V356.45 L1113.0500000000002 360.59999999999997 L1108.9 356.45 Z" fill="#0078d7"/>
<text class="sf" x="794.88" y="315.4" font-size="12" fill="#66003a" font-weight="bold" textLength="8.43" lengthAdjust="spacingAndGlyphs" >P</text>
<text class="sf" x="794.90" y="329" font-size="12" fill="#66003a" font-weight="bold" textLength="7.47" lengthAdjust="spacingAndGlyphs" >L</text>
<text class="sf" x="795.29" y="342" font-size="12" fill="#66003a" font-weight="bold" textLength="8.06" lengthAdjust="spacingAndGlyphs" >O</text>
<text class="sf" x="795.58" y="355" font-size="12" fill="#66003a" font-weight="bold" textLength="7.45" lengthAdjust="spacingAndGlyphs" >T</text>
<text class="sf" x="815.44" y="312.4" font-size="12.8" fill="#5a0a3c" font-weight="bold" textLength="31.36" lengthAdjust="spacingAndGlyphs" >Scale</text>
<text class="sf" x="815.45" y="338" font-size="12.8" fill="#5a0a3c" font-weight="bold" textLength="23.41" lengthAdjust="spacingAndGlyphs" >Size</text>
<g shape-rendering="crispEdges">
<rect x="845" y="323" width="164" height="24" fill="#ffffff" />
<rect x="845" y="323" width="163" height="23" fill="#a0a0a0" />
<rect x="846" y="324" width="162" height="22" fill="#e3e3e3" />
<rect x="846" y="324" width="161" height="21" fill="#696969" />
<rect x="847" y="325" width="160" height="20" fill="#f0fff0" />
</g>
<circle cx="861.4" cy="334.5" r="6.2" fill="#fff" stroke="#333" stroke-width="1"/>
<text class="sf" x="873.17" y="339" font-size="12.5" fill="#4a0032" font-weight="bold" textLength="37.61" lengthAdjust="spacingAndGlyphs" >normal</text>
<circle cx="925.5" cy="334.5" r="6.2" fill="#fff" stroke="#333" stroke-width="1"/>
<circle cx="925.5" cy="334.5" r="3" fill="#111"/>
<text class="sf" x="937.64" y="339" font-size="12.5" fill="#4a0032" font-weight="bold" textLength="17.88" lengthAdjust="spacingAndGlyphs" >x 2</text>
<circle cx="969.5" cy="334.5" r="6.2" fill="#fff" stroke="#333" stroke-width="1"/>
<text class="sf" x="981.64" y="339" font-size="12.5" fill="#4a0032" font-weight="bold" textLength="17.89" lengthAdjust="spacingAndGlyphs" >x 5</text>
<text class="sf" x="1029.85" y="339" font-size="12.3" fill="#800080" font-weight="bold" textLength="72.09" lengthAdjust="spacingAndGlyphs" >Form opacity</text>
<text class="sf" x="816.14" y="364" font-size="12.3" fill="#7a0014" font-weight="bold" textLength="103.37" lengthAdjust="spacingAndGlyphs" >Scroll range x1.25</text>
<rect x="927.5" y="353.5" width="12" height="12" fill="#ffffff" stroke="#333333" stroke-width="1" shape-rendering="crispEdges"/>
<text class="sf" x="800.34" y="393" font-size="12.7" fill="#000" textLength="94.24" lengthAdjust="spacingAndGlyphs" >RMS fit 0.9 ±2.8 km</text>
<g shape-rendering="crispEdges">
<rect x="793" y="402" width="328" height="396" fill="#ffffff" />
<rect x="793" y="402" width="327" height="395" fill="#a0a0a0" />
<rect x="794" y="403" width="326" height="394" fill="#e3e3e3" />
<rect x="794" y="403" width="325" height="393" fill="#696969" />
<rect x="795" y="404" width="324" height="392" fill="#ffffff" />
<rect x="800" y="410" width="66" height="2" fill="#4b0082" />
<rect x="800" y="422" width="66" height="2" fill="#ff0000" />
<rect x="800" y="434" width="66" height="2" fill="#0000ff" />
<rect x="795" y="780" width="324" height="16" fill="#f0f0f0" />
<rect x="812" y="780" width="205" height="15" fill="#a6a6a6" />
</g>
<circle cx="802.1" cy="447.5" r="1.15" fill="#ffc4e2" stroke="#ff58b0" stroke-width="0.9"/>
<circle cx="817.2" cy="447.5" r="1.15" fill="#ffc4e2" stroke="#ff58b0" stroke-width="0.9"/>
<circle cx="832.3" cy="447.5" r="1.15" fill="#ffc4e2" stroke="#ff58b0" stroke-width="0.9"/>
<circle cx="847.4" cy="447.5" r="1.15" fill="#ffc4e2" stroke="#ff58b0" stroke-width="0.9"/>
<circle cx="862.5" cy="447.5" r="1.15" fill="#ffc4e2" stroke="#ff58b0" stroke-width="0.9"/>
<path d="M805.0 784.4 L801.0 787.5 L805.0 790.6" stroke="#404040" stroke-width="2.0" fill="none"/>
<path d="M1109.0 784.4 L1113.0 787.5 L1109.0 790.6" stroke="#404040" stroke-width="2.0" fill="none"/>
<g clip-path="url(#lc)">
<text class="mf" x="888.3" y="416" font-size="12.2" textLength="231.6" lengthAdjust="spacingAndGlyphs">1    D Gault, near Hawkesbur</text>
<text class="mf" x="888.3" y="428" font-size="12.2" textLength="231.6" lengthAdjust="spacingAndGlyphs">2    P Nosworthy, near Hazel</text>
<text class="mf" x="888.3" y="440" font-size="12.2" textLength="231.6" lengthAdjust="spacingAndGlyphs">3    H Pavlov, near St Clair</text>
<text class="mf" x="888.3" y="452" font-size="12.2" textLength="115.8" lengthAdjust="spacingAndGlyphs">4(P) Predicted</text>
</g>
</svg>
</body></html>
